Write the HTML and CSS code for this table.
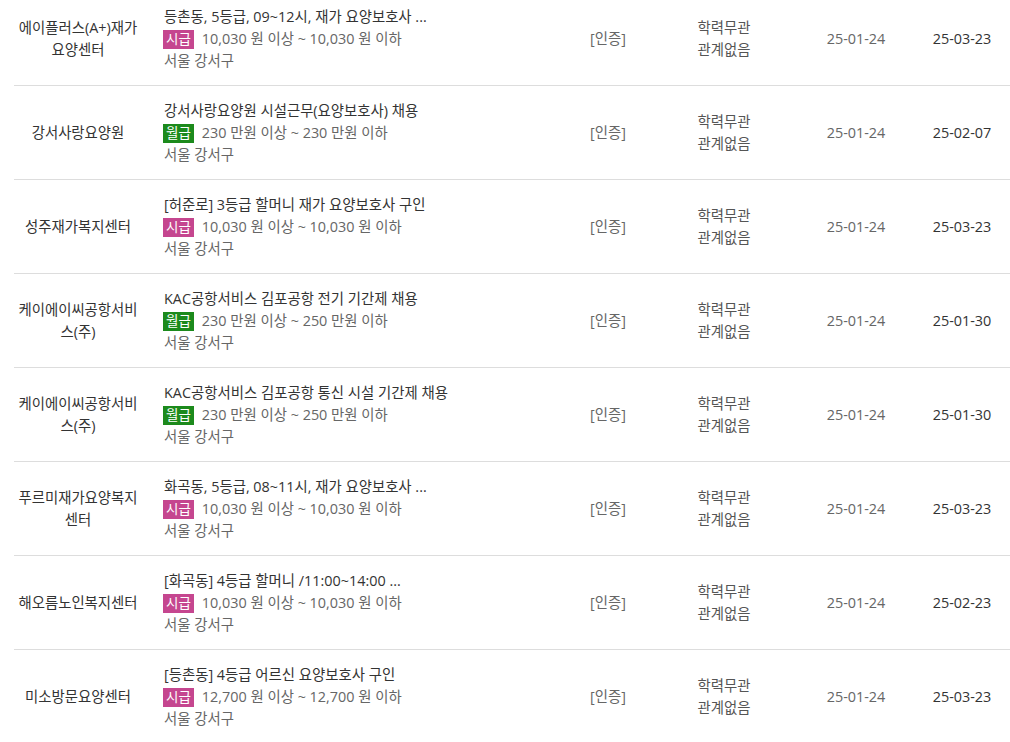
FILE: index.html
```html
<!DOCTYPE html>
<html lang="ko">
<head>
<meta charset="utf-8">
<title>채용정보 목록</title>
<link rel="stylesheet" href="styles.css">
</head>
<body>
<div class="list">
  <div class="row">
    <div class="company">에이플러스(A+)재가요양센터</div>
    <div class="info">
      <div class="title">등촌동, 5등급, 09~12시, 재가 요양보호사 ...</div>
      <div class="pay"><span class="badge hourly">시급</span>10,030 원 이상 ~ 10,030 원 이하</div>
      <div class="loc">서울 강서구</div>
    </div>
    <div class="cert">[인증]</div>
    <div class="edu">학력무관<br>관계없음</div>
    <div class="date">25-01-24</div>
    <div class="deadline">25-03-23</div>
  </div>
  <div class="row">
    <div class="company">강서사랑요양원</div>
    <div class="info">
      <div class="title">강서사랑요양원 시설근무(요양보호사) 채용</div>
      <div class="pay"><span class="badge monthly">월급</span>230 만원 이상 ~ 230 만원 이하</div>
      <div class="loc">서울 강서구</div>
    </div>
    <div class="cert">[인증]</div>
    <div class="edu">학력무관<br>관계없음</div>
    <div class="date">25-01-24</div>
    <div class="deadline">25-02-07</div>
  </div>
  <div class="row">
    <div class="company">성주재가복지센터</div>
    <div class="info">
      <div class="title">[허준로] 3등급 할머니 재가 요양보호사 구인</div>
      <div class="pay"><span class="badge hourly">시급</span>10,030 원 이상 ~ 10,030 원 이하</div>
      <div class="loc">서울 강서구</div>
    </div>
    <div class="cert">[인증]</div>
    <div class="edu">학력무관<br>관계없음</div>
    <div class="date">25-01-24</div>
    <div class="deadline">25-03-23</div>
  </div>
  <div class="row">
    <div class="company">케이에이씨공항서비스(주)</div>
    <div class="info">
      <div class="title">KAC공항서비스 김포공항 전기 기간제 채용</div>
      <div class="pay"><span class="badge monthly">월급</span>230 만원 이상 ~ 250 만원 이하</div>
      <div class="loc">서울 강서구</div>
    </div>
    <div class="cert">[인증]</div>
    <div class="edu">학력무관<br>관계없음</div>
    <div class="date">25-01-24</div>
    <div class="deadline">25-01-30</div>
  </div>
  <div class="row">
    <div class="company">케이에이씨공항서비스(주)</div>
    <div class="info">
      <div class="title">KAC공항서비스 김포공항 통신 시설 기간제 채용</div>
      <div class="pay"><span class="badge monthly">월급</span>230 만원 이상 ~ 250 만원 이하</div>
      <div class="loc">서울 강서구</div>
    </div>
    <div class="cert">[인증]</div>
    <div class="edu">학력무관<br>관계없음</div>
    <div class="date">25-01-24</div>
    <div class="deadline">25-01-30</div>
  </div>
  <div class="row">
    <div class="company">푸르미재가요양복지센터</div>
    <div class="info">
      <div class="title">화곡동, 5등급, 08~11시, 재가 요양보호사 ...</div>
      <div class="pay"><span class="badge hourly">시급</span>10,030 원 이상 ~ 10,030 원 이하</div>
      <div class="loc">서울 강서구</div>
    </div>
    <div class="cert">[인증]</div>
    <div class="edu">학력무관<br>관계없음</div>
    <div class="date">25-01-24</div>
    <div class="deadline">25-03-23</div>
  </div>
  <div class="row">
    <div class="company">해오름노인복지센터</div>
    <div class="info">
      <div class="title">[화곡동] 4등급 할머니 /11:00~14:00 ...</div>
      <div class="pay"><span class="badge hourly">시급</span>10,030 원 이상 ~ 10,030 원 이하</div>
      <div class="loc">서울 강서구</div>
    </div>
    <div class="cert">[인증]</div>
    <div class="edu">학력무관<br>관계없음</div>
    <div class="date">25-01-24</div>
    <div class="deadline">25-02-23</div>
  </div>
  <div class="row">
    <div class="company">미소방문요양센터</div>
    <div class="info">
      <div class="title">[등촌동] 4등급 어르신 요양보호사 구인</div>
      <div class="pay"><span class="badge hourly">시급</span>12,700 원 이상 ~ 12,700 원 이하</div>
      <div class="loc">서울 강서구</div>
    </div>
    <div class="cert">[인증]</div>
    <div class="edu">학력무관<br>관계없음</div>
    <div class="date">25-01-24</div>
    <div class="deadline">25-03-23</div>
  </div>
</div>
</body>
</html>
```

FILE: styles.css
```css
html, body {
  margin: 0;
  padding: 0;
  background: #fff;
}

body {
  font-family: "Open Sans", "Noto Sans CJK KR", sans-serif;
  font-size: 14.4px;
  color: #333;
  overflow: hidden;
}

.list {
  margin: -9px 0 0 14px;
  border-top: 1px solid #ddd;
}

.row {
  display: grid;
  grid-template-columns: 128px 418px 96px 136px 128px 84px;
  align-items: center;
  border-bottom: 1px solid #ddd;
  padding: 14px 0 13px;
  line-height: 22px;
}

.company {
  text-align: center;
  padding: 0 1px;
  color: #333;
}

.info {
  padding-left: 22px;
}

.title {
  color: #333;
  white-space: nowrap;
}

.pay {
  color: #666;
  display: flex;
  align-items: center;
  white-space: nowrap;
}

.badge {
  display: inline-block;
  color: #fff;
  font-size: 13.5px;
  line-height: 19px;
  height: 19px;
  padding: 0 3px;
  margin-right: 8px;
  margin-left: -1px;
}

.badge.hourly {
  background: #c5468f;
}

.badge.monthly {
  background: #1c8a1c;
}

.loc {
  color: #666;
}

.cert {
  text-align: center;
  color: #666;
}

.edu {
  text-align: center;
  color: #555;
}

.date {
  text-align: center;
  color: #666;
}

.deadline {
  text-align: center;
  color: #333;
}
```
